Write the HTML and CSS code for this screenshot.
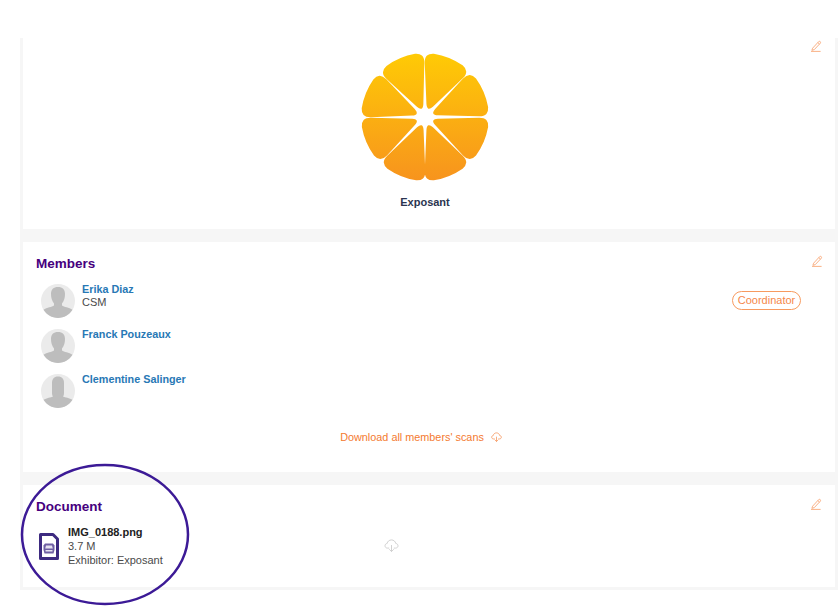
FILE: index.html
```html
<!DOCTYPE html>
<html lang="en">
<head>
<meta charset="utf-8">
<title>Exposant</title>
<link rel="stylesheet" href="styles.css">
</head>
<body>
<svg class="defs" width="0" height="0" aria-hidden="true">
  <defs>
    <symbol id="pencil" viewBox="0 0 12 12">
      <path d="M2.600 8.200 8.600 1.700c.5-.5 1.200-.5 1.600-.1.5.4.5 1.100.1 1.600L4.300 9.600l-2.400.7zM7.800 2.600l1.800 1.600" fill="none" stroke="currentColor" stroke-width=".9"/>
      <path d="M1 11.400h9.600" fill="none" stroke="currentColor" stroke-width=".9"/>
    </symbol>
    <symbol id="cloud" viewBox="0 0 16 14">
      <path d="M5.500 9.800H3.600C2 9.800 1 8.600 1 7.300c0-1.300 1-2.400 2.300-2.500C3.600 2.600 5.600 1 8 1c2.300 0 4.200 1.600 4.600 3.800 1.400.1 2.400 1.200 2.400 2.500 0 1.300-1 2.500-2.600 2.500h-1.900M8 6.500v7M5.500 11 8 13.500 10.500 11" fill="none" stroke="currentColor" stroke-width=".9"/>
    </symbol>
    <symbol id="person" viewBox="0 0 34 34">
      <circle cx="17" cy="17" r="17" fill="#ebebeb"/>
      <path d="M17 3C21.500 3 24 5.500 24 10C24 14 23 17 21 19.500V21.500C23 23 28 23.500 31.500 25.800C28.300 30.800 23 34 17 34C11 34 5.700 30.800 2.500 25.800C6 23.500 11 23 13 21.500V19.500C11 17 10 14 10 10C10 5.500 12.500 3 17 3Z" fill="#bdbdbd"/>
    </symbol>
    <symbol id="person-long" viewBox="0 0 34 34">
      <circle cx="17" cy="17" r="17" fill="#ebebeb"/>
      <path d="M17 2.500C21 2.500 23 5 23 9V19C23 21 22.500 22 22 22.500C24 23.500 28.500 24 31.500 25.800C28.300 30.800 23 34 17 34C11 34 5.700 30.800 2.500 25.800C5.500 24 10 23.500 12 22.500C11.500 22 11 21 11 19V9C11 5 13 2.500 17 2.500Z" fill="#bdbdbd"/>
    </symbol>
    <linearGradient id="orange-fill" x1="0" y1="0" x2="0" y2="1">
      <stop offset="0" stop-color="#ffcb05"/>
      <stop offset="1" stop-color="#f7931e"/>
    </linearGradient>
    <clipPath id="petals">
      <path transform="translate(65 65) rotate(22)" d="M-3.500-12.500-20.500-50Q-24.500-59-15.500-62Q0-65.500 15.500-62Q24.500-59 20.500-50L3.500-12.500Q0-5.500-3.500-12.500Z"/>
      <path transform="translate(65 65) rotate(67)" d="M-3.500-12.500-20.500-50Q-24.500-59-15.500-62Q0-65.500 15.500-62Q24.500-59 20.500-50L3.500-12.500Q0-5.500-3.500-12.500Z"/>
      <path transform="translate(65 65) rotate(113)" d="M-3.500-12.500-20.500-50Q-24.500-59-15.500-62Q0-65.500 15.500-62Q24.500-59 20.500-50L3.500-12.500Q0-5.500-3.500-12.500Z"/>
      <path transform="translate(65 65) rotate(158)" d="M-3.500-12.500-20.500-50Q-24.500-59-15.500-62Q0-65.500 15.500-62Q24.500-59 20.500-50L3.500-12.500Q0-5.500-3.500-12.500Z"/>
      <path transform="translate(65 65) rotate(202)" d="M-3.500-12.500-20.500-50Q-24.500-59-15.500-62Q0-65.500 15.500-62Q24.500-59 20.500-50L3.500-12.500Q0-5.500-3.500-12.500Z"/>
      <path transform="translate(65 65) rotate(247)" d="M-3.500-12.500-20.500-50Q-24.500-59-15.500-62Q0-65.500 15.500-62Q24.500-59 20.500-50L3.500-12.500Q0-5.500-3.500-12.500Z"/>
      <path transform="translate(65 65) rotate(292)" d="M-3.500-12.500-20.500-50Q-24.500-59-15.500-62Q0-65.500 15.500-62Q24.500-59 20.500-50L3.500-12.500Q0-5.500-3.500-12.500Z"/>
      <path transform="translate(65 65) rotate(337)" d="M-3.500-12.500-20.500-50Q-24.500-59-15.500-62Q0-65.500 15.500-62Q24.500-59 20.500-50L3.500-12.500Q0-5.500-3.500-12.500Z"/>
    </clipPath>
  </defs>
</svg>

<main class="page">
  <section class="card card-logo">
    <svg class="icon-edit"><use href="#pencil"/></svg>
    <svg class="logo" viewBox="0 0 130 130" width="130" height="130" role="img" aria-label="Exposant logo">
      <rect width="130" height="130" fill="url(#orange-fill)" clip-path="url(#petals)"/>
    </svg>
    <p class="logo-name">Exposant</p>
  </section>

  <section class="card card-members">
    <svg class="icon-edit"><use href="#pencil"/></svg>
    <h2 class="card-title">Members</h2>
    <ul class="members">
      <li class="member">
        <svg class="avatar"><use href="#person"/></svg>
        <div class="member-info">
          <a class="member-name">Erika Diaz</a>
          <span class="member-role">CSM</span>
        </div>
        <span class="badge">Coordinator</span>
      </li>
      <li class="member">
        <svg class="avatar"><use href="#person"/></svg>
        <div class="member-info">
          <a class="member-name">Franck Pouzeaux</a>
        </div>
      </li>
      <li class="member">
        <svg class="avatar"><use href="#person-long"/></svg>
        <div class="member-info">
          <a class="member-name">Clementine Salinger</a>
        </div>
      </li>
    </ul>
    <a class="download-all">Download all members' scans<svg class="icon-cloud"><use href="#cloud"/></svg></a>
  </section>

  <section class="card card-document">
    <svg class="icon-edit"><use href="#pencil"/></svg>
    <h2 class="card-title">Document</h2>
    <div class="document">
      <svg class="file-icon" viewBox="0 0 20 27" width="20" height="27" aria-hidden="true">
        <path d="M1.500 1.500H14L18.500 6V25.500H1.500z" fill="#fff" stroke="#3d2a80" stroke-width="3" stroke-linejoin="round"/>
        <path d="M6 10.500h8l1.500 2v4.500l-1 3.500h-9l-1-3.500v-4.500z" fill="#6f5fa3"/>
        <path d="M7 12.500h6l.8 3H6.200z" fill="#e6e2f0"/>
        <path d="M6.500 17h7v1.500h-7z" fill="#e6e2f0"/>
      </svg>
      <div class="file-info">
        <strong class="file-name">IMG_0188.png</strong>
        <span>3.7 M</span>
        <span>Exhibitor: Exposant</span>
      </div>
      <svg class="icon-cloud icon-cloud-grey"><use href="#cloud"/></svg>
    </div>
  </section>

  <svg class="highlight" width="170" height="144" viewBox="0 0 170 144" aria-hidden="true">
    <ellipse cx="85" cy="71.500" rx="83" ry="69.500" fill="none" stroke="#3c1a96" stroke-width="2.500"/>
  </svg>
</main>
</body>
</html>
```

FILE: styles.css
```css
* { box-sizing: border-box; }

html, body {
  margin: 0;
  padding: 0;
  background: #fff;
}

body {
  min-height: 100vh;
  padding: 38px 0 0 20px;
  font-family: "Liberation Sans", Arial, sans-serif;
  font-size: 11px;
  color: #3a3a3a;
  overflow: hidden;
}

.defs { position: absolute; }

.page {
  position: relative;
  width: 818px;
  padding: 0 3px 3px;
  background: #f6f6f6;
  display: flex;
  flex-direction: column;
  gap: 13px;
}

.card {
  position: relative;
  background: #fff;
}

.card-logo {
  height: 191px;
  padding: 14px 8px 0 0;
  display: flex;
  flex-direction: column;
  align-items: center;
}

.logo { display: block; }

.logo-name {
  margin: 13px 0 0;
  font-size: 11px;
  line-height: 14px;
  font-weight: 700;
  color: #2b3550;
}

.icon-edit {
  position: absolute;
  top: 2px;
  right: 13px;
  width: 12px;
  height: 12px;
  color: #f8a878;
}

.card-members .icon-edit { top: 13px; right: 12px; }
.card-document .icon-edit { top: 13px; }

.card-title {
  margin: 0;
  font-size: 13.500px;
  line-height: 18px;
  font-weight: 700;
  color: #46007e;
}

.card-members {
  height: 230px;
  padding: 13px 34px 0 13px;
}

.members {
  list-style: none;
  margin: 11px 0 0;
  padding: 0 0 0 5px;
  display: flex;
  flex-direction: column;
  gap: 11px;
}

.member {
  display: flex;
  align-items: flex-start;
  height: 34px;
}

.avatar {
  width: 34px;
  height: 34px;
  flex: none;
}

.member-info {
  margin: -1px 0 0 7px;
  display: flex;
  flex-direction: column;
  line-height: 12px;
}

.member-name {
  font-weight: 700;
  font-size: 10.800px;
  line-height: 12px;
  color: #2878b5;
}

.member-role {
  font-size: 11px;
  margin-top: 1px;
  color: #4a4a4a;
}

.badge {
  margin: 7px 0 0 auto;
  height: 19px;
  width: 69px;
  border: 1px solid #f79a5f;
  border-radius: 10px;
  font-size: 11px;
  line-height: 17px;
  text-align: center;
  color: #f5874a;
}

.download-all {
  display: flex;
  align-items: center;
  justify-content: center;
  margin: 22px 0 0 5px;
  line-height: 14px;
  font-size: 10.850px;
  color: #f47a30;
}

.icon-cloud {
  width: 11px;
  height: 10px;
  margin-left: 7px;
  color: #f47a30;
}

.card-document {
  height: 102px;
  padding: 13px 13px 0;
}

.document {
  display: flex;
  align-items: center;
  margin: 9px 0 0 3px;
}

.file-icon { flex: none; }

.file-info {
  margin-left: 9px;
  width: 94px;
  display: flex;
  flex-direction: column;
  font-size: 11px;
  line-height: 14px;
  white-space: nowrap;
  color: #4a4a4a;
}

.file-name { color: #222; }

.icon-cloud-grey {
  width: 15px;
  height: 13px;
  margin: -2px 0 0 222px;
  color: #c9c9c9;
}

.highlight {
  position: absolute;
  left: 0;
  top: 425px;
  pointer-events: none;
}
```
